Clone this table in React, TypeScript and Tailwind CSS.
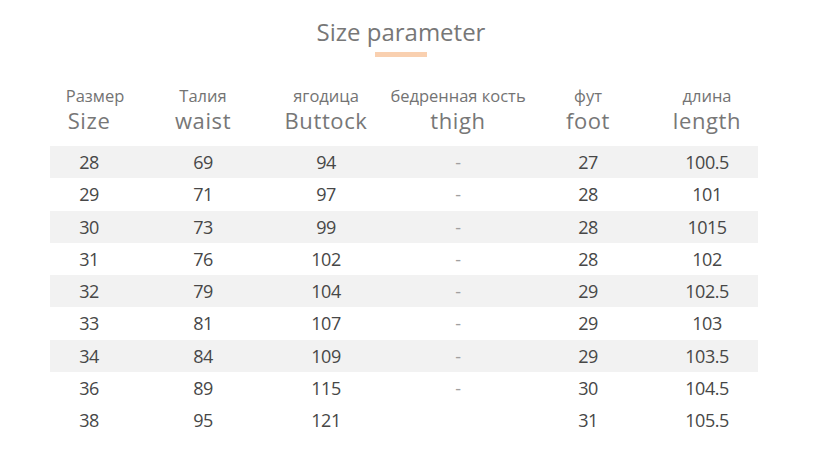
import React from "react";

const rows: string[][] = [
  ["28", "69", "94", "-", "27", "100.5"],
  ["29", "71", "97", "-", "28", "101"],
  ["30", "73", "99", "-", "28", "1015"],
  ["31", "76", "102", "-", "28", "102"],
  ["32", "79", "104", "-", "29", "102.5"],
  ["33", "81", "107", "-", "29", "103"],
  ["34", "84", "109", "-", "29", "103.5"],
  ["36", "89", "115", "-", "30", "104.5"],
  ["38", "95", "121", "", "31", "105.5"],
];

const headers: [string, string][] = [
  ["Размер", "Size"],
  ["Талия", "waist"],
  ["ягодица", "Buttock"],
  ["бедренная кость", "thigh"],
  ["фут", "foot"],
  ["длина", "length"],
];

const cellCls = [
  "w-[78px]",
  "w-[150px]",
  "w-[96px]",
  "w-[168px]",
  "w-[92px]",
  "w-[124px] pl-[22px]",
];

export default function App() {
  return (
    <div
      className="w-[818px] h-[450px] bg-white flex flex-col overflow-hidden"
      style={{ fontFamily: '"Open Sans", "Noto Sans", sans-serif' }}
    >
      <div className="flex flex-col items-center pt-[16px] pr-[16px]">
        <div className="text-[24px] leading-[32px] text-[#777]">Size parameter</div>
        <div className="mt-[4px] h-[5px] w-[52px] bg-[#f9d0b0]" />
      </div>

      <div className="ml-[50px] mt-[29px] flex">
        {headers.map(([ru, en], i) => (
          <div key={i} className={`${cellCls[i]} shrink-0 flex flex-col items-center`}>
            <div className={`text-[16.5px] leading-[20px] text-[#737373] whitespace-nowrap ${i === 0 ? "translate-x-[6px]" : ""}`}>
              {ru}
            </div>
            <div className="mt-[2px] text-[22px] leading-[24px] tracking-[0.6px] text-[#777] whitespace-nowrap">
              {en}
            </div>
          </div>
        ))}
      </div>

      <div className="ml-[50px] mt-[14px] flex flex-col">
        {rows.map((r, ri) => (
          <div
            key={ri}
            className={`w-[708px] h-[32.25px] flex items-center ${ri % 2 === 0 && ri < 8 ? "bg-[#f2f2f2]" : ""}`}
          >
            {r.map((c, ci) => (
              <div
                key={ci}
                className={`${cellCls[ci]} shrink-0 text-center text-[18px] leading-[24px] tracking-[-0.5px] ${ci === 3 ? "text-[#a0a0a0]" : "text-[#474747]"}`}
              >
                {c}
              </div>
            ))}
          </div>
        ))}
      </div>
    </div>
  );
}
